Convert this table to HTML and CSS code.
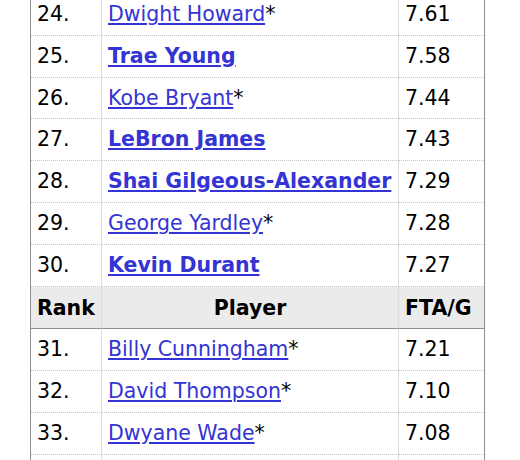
FILE: index.html
```html
<!DOCTYPE html>
<html>
<head>
<meta charset="utf-8">
<link rel="stylesheet" href="styles.css">
</head>
<body>
<table class="ranks">
  <colgroup><col class="c-rank"><col class="c-player"><col class="c-val"></colgroup>
  <tbody>
    <tr><td>24.</td><td><a href="#">Dwight Howard</a>*</td><td>7.61</td></tr>
    <tr><td>25.</td><td><a href="#" class="active">Trae Young</a></td><td>7.58</td></tr>
    <tr><td>26.</td><td><a href="#">Kobe Bryant</a>*</td><td>7.44</td></tr>
    <tr><td>27.</td><td><a href="#" class="active">LeBron James</a></td><td>7.43</td></tr>
    <tr><td>28.</td><td><a href="#" class="active">Shai Gilgeous-Alexander</a></td><td>7.29</td></tr>
    <tr><td>29.</td><td><a href="#">George Yardley</a>*</td><td>7.28</td></tr>
    <tr><td>30.</td><td><a href="#" class="active">Kevin Durant</a></td><td>7.27</td></tr>
    <tr class="head"><th class="left">Rank</th><th>Player</th><th class="left">FTA/G</th></tr>
    <tr><td>31.</td><td><a href="#">Billy Cunningham</a>*</td><td>7.21</td></tr>
    <tr><td>32.</td><td><a href="#">David Thompson</a>*</td><td>7.10</td></tr>
    <tr><td>33.</td><td><a href="#">Dwyane Wade</a>*</td><td>7.08</td></tr>
    <tr><td>34.</td><td><a href="#">Elvin Hayes</a>*</td><td>7.05</td></tr>
  </tbody>
</table>
</body>
</html>
```
FILE: styles.css
```css
html, body {
  margin: 0;
  padding: 0;
  background: #fff;
}
body {
  font-family: "DejaVu Sans", Verdana, sans-serif;
  font-size: 20.5px;
  line-height: 1.6;
  color: #000;
  overflow: hidden;
}
.ranks {
  margin: -6px 0 0 30px;
  border-collapse: separate;
  border-spacing: 0;
  table-layout: fixed;
  width: 455px;
  border-left: 1px solid #8f8f8f;
  border-right: 1px solid #8f8f8f;
}
.c-rank { width: 71px; }
.c-player { width: 297px; }
.c-val { width: 85px; }
.ranks td, .ranks th {
  padding: 4px 6px;
  border-bottom: 1px dotted #c4c4c4;
  border-right: 1px solid #dcdcdc;
  text-align: left;
  white-space: nowrap;
  vertical-align: middle;
}
.ranks td:last-child, .ranks th:last-child {
  border-right: none;
}
.ranks a {
  color: #3434d4;
  text-decoration: underline;
}
.ranks a.active {
  font-weight: bold;
}
.head th {
  background: #ebebeb;
  font-weight: bold;
  text-align: center;
  border-bottom: 1px solid #8f8f8f;
  padding-top: 5px;
}
.head th.left {
  text-align: left;
}
```
